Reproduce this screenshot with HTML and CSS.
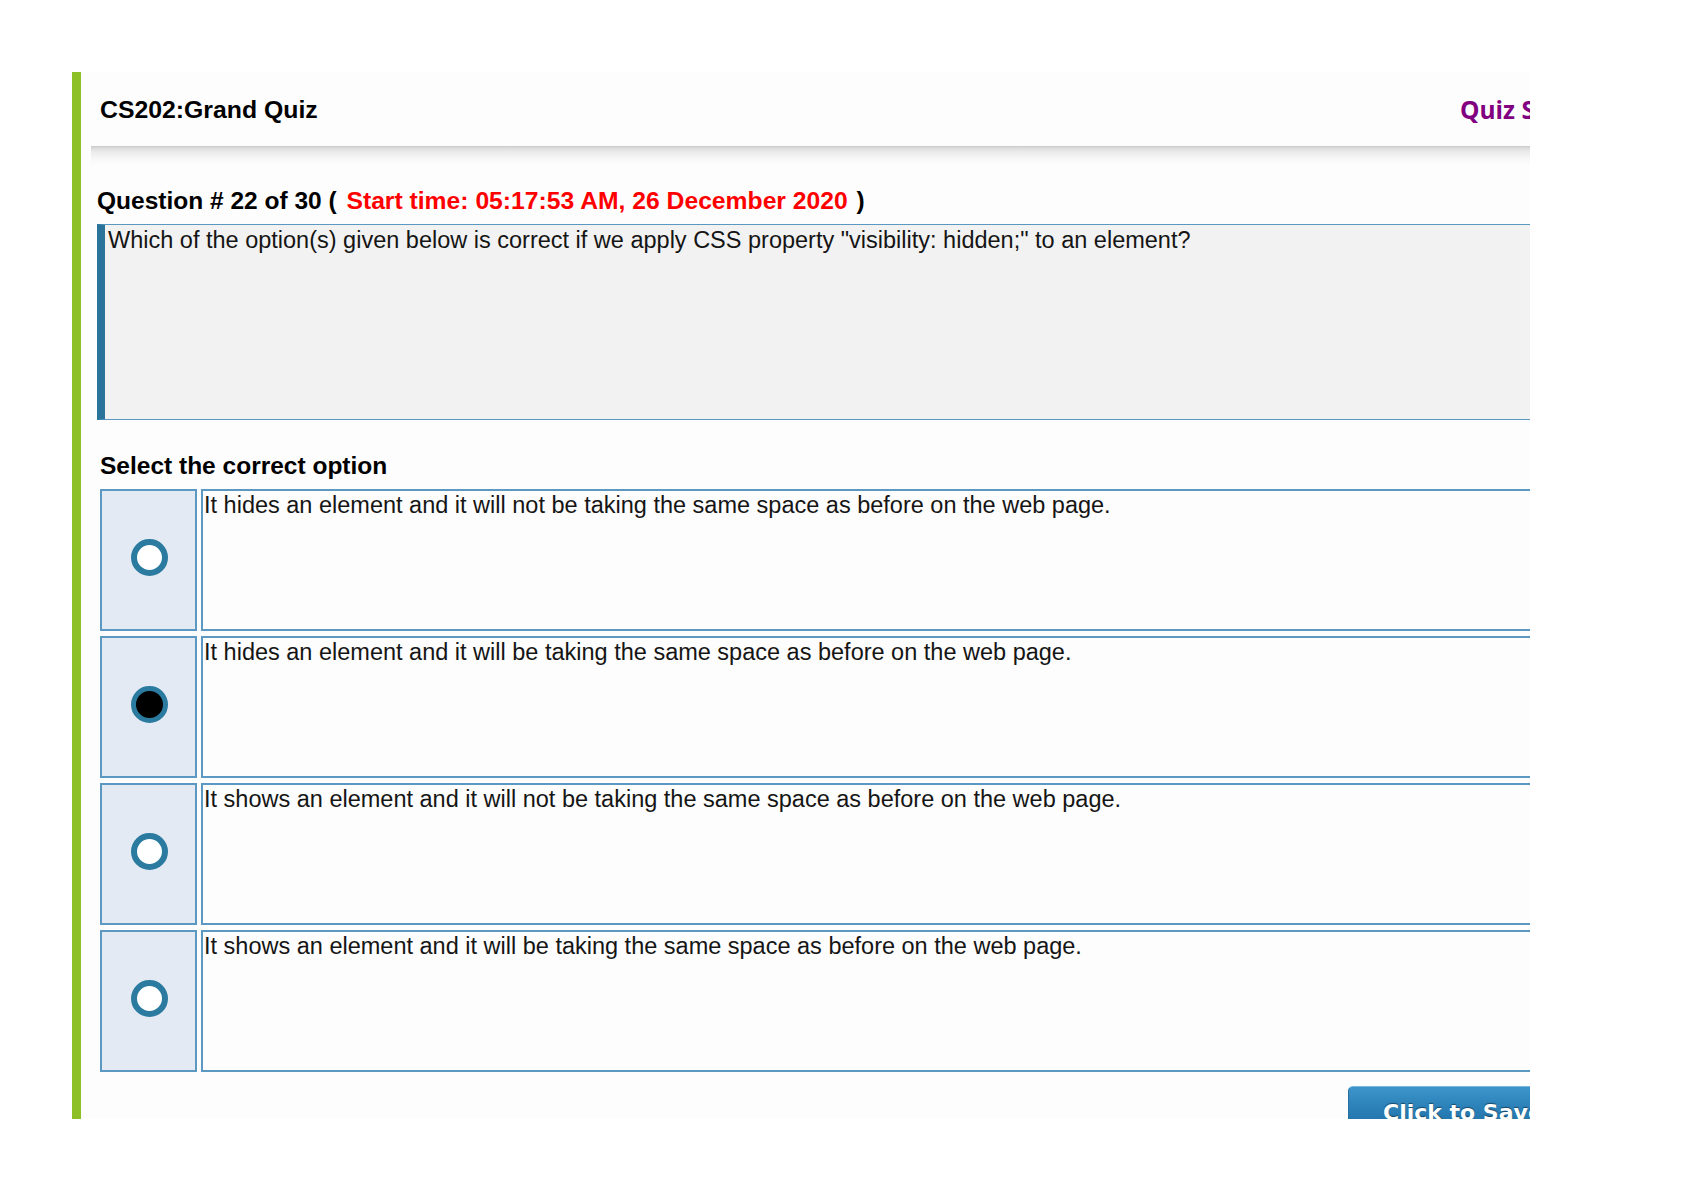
FILE: index.html
```html
<!DOCTYPE html>
<html lang="en">
<head>
<meta charset="utf-8">
<title>CS202:Grand Quiz</title>
<link rel="stylesheet" href="styles.css">
</head>
<body>
<div class="page">
  <div class="panel">
    <div class="topbar">
      <h1 class="quiz-title">CS202:Grand Quiz</h1>
      <a class="quiz-link">Quiz Statistics</a>
    </div>
    <div class="topbar-shadow"></div>
    <div class="quiz-body">
      <h2 class="q-heading">Question # 22 of 30 ( <span class="start-time">Start time: 05:17:53 AM, 26 December 2020</span> )</h2>
      <div class="q-box">Which of the option(s) given below is correct if we apply CSS property "visibility: hidden;" to an element?</div>
      <h3 class="opt-heading">Select the correct option</h3>
      <div class="options">
        <div class="opt-radio"><span class="radio"></span></div>
        <div class="opt-text">It hides an element and it will not be taking the same space as before on the web page.</div>
        <div class="opt-radio"><span class="radio checked"></span></div>
        <div class="opt-text">It hides an element and it will be taking the same space as before on the web page.</div>
        <div class="opt-radio"><span class="radio"></span></div>
        <div class="opt-text">It shows an element and it will not be taking the same space as before on the web page.</div>
        <div class="opt-radio"><span class="radio"></span></div>
        <div class="opt-text">It shows an element and it will be taking the same space as before on the web page.</div>
      </div>
      <div class="actions">
        <button class="save-btn" type="button">Click to Save Answer</button>
      </div>
    </div>
  </div>
</div>
</body>
</html>
```
FILE: styles.css
```css
html, body {
  margin: 0;
  padding: 0;
  background: #ffffff;
}

body {
  font-family: "Liberation Sans", Arial, sans-serif;
  color: #111111;
}

.page {
  padding: 72px 0 0 72px;
}

.panel {
  box-sizing: border-box;
  width: 1458px;
  height: 1047px;
  border-left: 9px solid #8dbf27;
  background: #fdfdfd;
  overflow: hidden;
}

.topbar {
  margin-left: 10px;
  height: 74px;
  box-sizing: border-box;
  padding: 1px 0 0 9px;
  display: grid;
  grid-template-columns: 1360px max-content;
  align-items: center;
  background: #fdfdfd;
}

.quiz-title {
  margin: 0;
  font-size: 24.8px;
  font-weight: bold;
  line-height: 28px;
  color: #000000;
  white-space: nowrap;
}

.quiz-link {
  font-family: "Open Sans", "Liberation Sans", sans-serif;
  font-size: 24.5px;
  font-weight: bold;
  line-height: 28px;
  color: #800080;
  white-space: nowrap;
  padding-top: 1px;
}

.topbar-shadow {
  margin-left: 10px;
  height: 19px;
  background: linear-gradient(to bottom, #c9c9c9 0, #dcdcdc 2px, #ebebeb 6px, #f6f6f6 12px, #fdfdfd 19px);
}

.quiz-body {
  width: 1470px;
  padding: 22px 0 0 16px;
}

.q-heading {
  margin: 0 0 9px 0;
  font-size: 24.5px;
  font-weight: bold;
  line-height: 28px;
  color: #000000;
  white-space: nowrap;
}

.start-time {
  color: #ff0000;
  font-size: 24.7px;
  margin: 0 2px 0 3px;
}

.q-box {
  box-sizing: border-box;
  height: 196px;
  border: 1px solid #5a98c2;
  border-left: 8px solid #2a739b;
  background: #f2f2f2;
  padding: 2px 3px;
  font-size: 23.5px;
  line-height: 27px;
  color: #151515;
  white-space: nowrap;
}

.opt-heading {
  margin: 32px 0 9px 3px;
  font-size: 24.5px;
  font-weight: bold;
  line-height: 28px;
  color: #000000;
}

.options {
  margin-left: 3px;
  display: grid;
  grid-template-columns: 97px 1fr;
  grid-auto-rows: 142px;
  column-gap: 4px;
  row-gap: 5px;
}

.opt-radio {
  box-sizing: border-box;
  border: 2px solid #5b99c3;
  background: #e3eaf4;
  display: flex;
  align-items: center;
  justify-content: center;
  padding: 0 0 6px 2px;
}

.opt-text {
  box-sizing: border-box;
  border: 2px solid #5b99c3;
  background: #fdfdfd;
  padding: 1px 3px 0 1px;
  font-size: 23.5px;
  line-height: 27px;
  color: #151515;
  white-space: nowrap;
}

.radio {
  box-sizing: border-box;
  width: 37px;
  height: 37px;
  border-radius: 50%;
  border: 6px solid #2b7a9f;
  background: #ffffff;
}

.radio.checked {
  border-width: 5.5px;
  background: #000000;
}

.actions {
  margin-top: 14px;
  display: flex;
  justify-content: flex-end;
}

.save-btn {
  box-sizing: border-box;
  width: 219px;
  height: 44px;
  margin: 0;
  padding: 10px 0 0 34px;
  border: 1px solid #2a6f9e;
  border-top-color: #78b6de;
  border-radius: 5px 5px 0 0;
  background: linear-gradient(to bottom, #3d96cb 0, #2c82b9 45%, #2070a6 100%);
  color: #ffffff;
  font-family: "DejaVu Sans", Verdana, sans-serif;
  font-size: 22px;
  font-weight: bold;
  line-height: 26px;
  text-align: left;
  white-space: nowrap;
  overflow: hidden;
  text-shadow: 0 -1px 1px rgba(0, 0, 0, 0.45);
  vertical-align: top;
}
```
